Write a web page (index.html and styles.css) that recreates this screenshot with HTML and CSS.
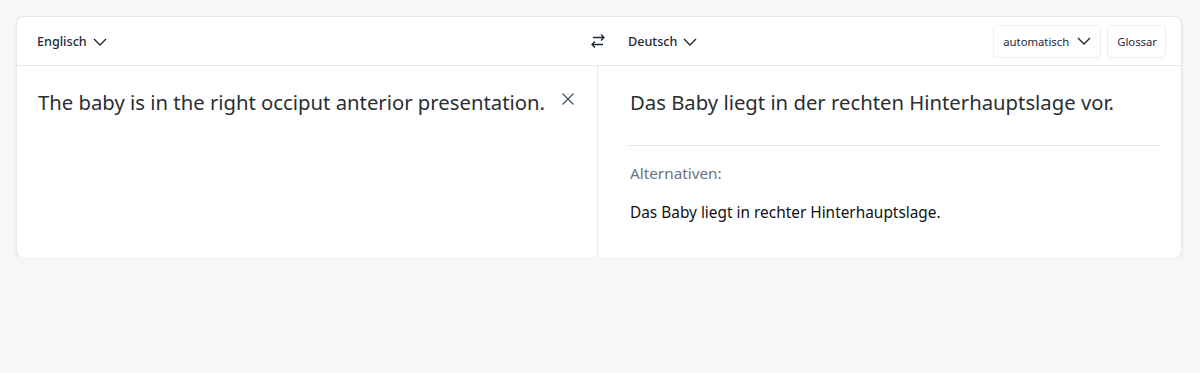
FILE: index.html
```html
<!DOCTYPE html>
<html lang="de">
<head>
<meta charset="utf-8">
<link rel="stylesheet" href="styles.css">
</head>
<body>
<div class="card">
  <div class="header">
    <div class="hleft">
      <button class="lang">Englisch
        <svg class="chev" width="16" height="16" viewBox="0 0 16 16"><path d="M2 5l6 6 6-6" fill="none" stroke="#1f2937" stroke-width="1.4"/></svg>
      </button>
    </div>
    <button class="swap">
      <svg width="18" height="18" viewBox="0 0 18 18"><path d="M4 5.5h11M12 2.5l3 3-3 3M14 12.5H3M6 9.5l-3 3 3 3" fill="none" stroke="#1f2937" stroke-width="1.3"/></svg>
    </button>
    <div class="hright">
      <button class="lang">Deutsch
        <svg class="chev" width="16" height="16" viewBox="0 0 16 16"><path d="M2 5l6 6 6-6" fill="none" stroke="#1f2937" stroke-width="1.4"/></svg>
      </button>
      <div class="tools">
        <button class="tbtn">automatisch
          <svg class="chev" width="16" height="16" viewBox="0 0 16 16"><path d="M2 5l6 6 6-6" fill="none" stroke="#1f2937" stroke-width="1.4"/></svg>
        </button>
        <button class="tbtn">Glossar</button>
      </div>
    </div>
  </div>
  <div class="body">
    <div class="src">
      <p class="srctext">The baby is in the right occiput anterior presentation.</p>
      <button class="clear">
        <svg width="14" height="14" viewBox="0 0 14 14"><path d="M1.5 1.5l11 11M12.5 1.5l-11 11" fill="none" stroke="#4b5563" stroke-width="1.3"/></svg>
      </button>
    </div>
    <div class="tgt">
      <p class="tgttext">Das Baby liegt in der rechten Hinterhauptslage vor.</p>
      <div class="alts">
        <div class="altlabel">Alternativen:</div>
        <div class="alt">Das Baby liegt in rechter Hinterhauptslage.</div>
      </div>
    </div>
  </div>
</div>
</body>
</html>
```
FILE: styles.css
```css
* { box-sizing: border-box; }
html, body { margin: 0; padding: 0; }
body {
  background: #f6f7f7;
  font-family: "Noto Sans", "Open Sans", sans-serif;
  color: #1f2937;
  padding: 17px 19px 0 17px;
}
button {
  font-family: inherit;
  background: none;
  border: none;
  padding: 0;
  cursor: pointer;
  color: inherit;
}
.card {
  background: #fff;
  border-radius: 6px;
  box-shadow: 0 0 0 1px #e6e8ea, 0 2px 4px rgba(0,0,0,0.10);
  height: 240px;
  display: flex;
  flex-direction: column;
}
.header {
  height: 49px;
  border-bottom: 1px solid #e5e7eb;
  display: flex;
  align-items: center;
}
.hleft {
  width: 568px;
  padding-left: 20px;
  display: flex;
  align-items: center;
}
.lang {
  display: flex;
  align-items: center;
  gap: 5px;
  font-size: 12.6px;
  font-weight: 500;
  color: #1f2937;
  padding-top: 1px;
}
.swap {
  width: 26px;
  display: flex;
  align-items: center;
  justify-content: center;
  margin-right: 17px;
}
.hright {
  flex: 1;
  display: flex;
  align-items: center;
  justify-content: space-between;
  padding-right: 15px;
}
.tools { display: flex; gap: 6px; }
.tbtn {
  height: 33px;
  border: 1px solid #eceef0;
  border-radius: 4px;
  padding: 0 8px 0 9px;
  font-size: 11.3px;
  display: flex;
  align-items: center;
  gap: 7px;
  color: #1f2937;
}
.body {
  flex: 1;
  display: flex;
}
.src {
  width: 581px;
  border-right: 1px solid #e5e7eb;
  display: flex;
  align-items: flex-start;
  padding: 22px 22px 0 21px;
}
.srctext {
  margin: 0;
  flex: 1;
  font-size: 20.3px;
  line-height: 28px;
  color: #2b2f33;
}
.clear {
  margin-top: 4px;
  display: flex;
}
.tgt {
  flex: 1;
  padding: 22px 20px 0 31px;
}
.tgttext {
  margin: 0 0 0 1px;
  font-size: 20.3px;
  line-height: 28px;
  color: #2b2f33;
}
.alts {
  margin-top: 29px;
  margin-left: -2px;
  border-top: 1px solid #e5e7eb;
  padding-top: 16px;
  padding-left: 3px;
}
.altlabel {
  font-size: 15.3px;
  color: #6b7280;
  line-height: 22px;
}
.alt {
  margin-top: 18px;
  font-size: 15.4px;
  line-height: 22px;
  color: #111;
}
```
